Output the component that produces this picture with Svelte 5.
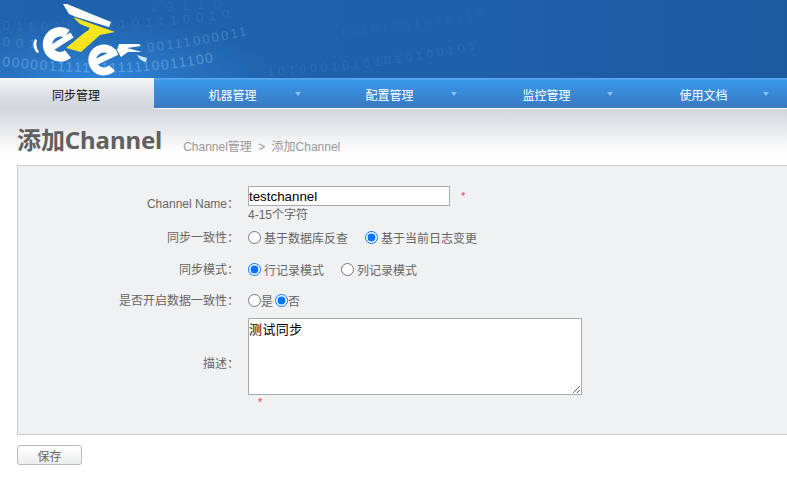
<script>
  const nav = ['机器管理', '配置管理', '监控管理', '使用文档'];
  const bits = [
    { d: 'M2 66 C 50 72, 120 76, 175 68 S 250 56, 340 40', t: '000001111101111110011100', s: 14, o: 0.36, l: 1.6 },
    { d: 'M148 52 C 180 48, 220 42, 265 31', t: '00111000011', s: 13, o: 0.26, l: 2.4 },
    { d: 'M2 46 C 40 50, 70 50, 100 46', t: '00110', s: 13, o: 0.2, l: 6 },
    { d: 'M2 30 C 60 32, 110 30, 170 25 S 260 12, 330 2', t: '011010110101110010', s: 13, o: 0.13, l: 6 },
    { d: 'M150 12 C 190 10, 220 8, 270 4', t: '10110', s: 13, o: 0.09, l: 9 },
    { d: 'M268 76 C 330 72, 420 64, 520 40', t: '10100010101010100101', s: 12, o: 0.12, l: 4 },
    { d: 'M340 36 C 400 32, 450 24, 520 10', t: '10101001010110', s: 12, o: 0.07, l: 4 }
  ];
</script>

<div class="page">
  <header class="banner">
    <svg class="binary" width="787" height="78" viewBox="0 0 787 78" aria-hidden="true">
      <defs>
        {#each bits as b, i}
          <path id={'bit' + i} d={b.d} />
        {/each}
      </defs>
      {#each bits as b, i}
        <text class="bit" font-size={b.s} fill-opacity={b.o} letter-spacing={b.l}><textPath href={'#bit' + i}>{b.t}</textPath></text>
      {/each}
    </svg>
    <svg class="logo" width="130" height="80" viewBox="25 0 130 80" aria-hidden="true">
      <path d="M63 4 L67 4 L111 22 L109 27 L76 17 L69 14 Z" fill="#fff" />
      <path d="M35 39 Q31 46 37 53 L39 52 Q35 46 37 40 Z" fill="#fff" />
      <path d="M67 34 A12.5 12.5 0 1 0 68 54" fill="none" stroke="#fff" stroke-width="9.5" />
      <path d="M50 49 L72 35" stroke="#fff" stroke-width="6" />
      <path d="M73 17 L115 32 L100 35 L81 52 L66 48 L90 28 L80 24 Z" fill="#f5e51e" />
      <path d="M81 32 L87 28 L89 30 L79 35 Z" fill="#1d63ad" />
      <path d="M113 53 A11.5 11.5 0 1 0 112 68" fill="none" stroke="#fff" stroke-width="8" />
      <path d="M94 63 L117 52" stroke="#fff" stroke-width="6" />
      <path d="M119 44 L139 44 L141 46 L127 48 L142 52 L128 52 L121 57 L117 50 Z" fill="#fff" />
      <path d="M137 55 L147 58 L146 62 Q140 61 137 55 Z" fill="#cfe6fa" />
    </svg>
  </header>

  <nav class="menu">
    <a class="item active" href="#top">同步管理</a>
    {#each nav as n}
      <a class="item" href="#top">{n}<span class="caret"></span></a>
    {/each}
  </nav>

  <div class="head">
    <h1>添加Channel</h1>
    <p class="crumb">Channel管理 <span class="sep">&gt;</span> 添加Channel</p>
  </div>

  <form class="panel">
    <div class="row r-name">
      <span class="label">Channel Name：</span>
      <div class="field">
        <div class="inline">
          <input class="text" value="testchannel" />
          <span class="star">*</span>
        </div>
        <div class="hint">4-15个字符</div>
      </div>
    </div>
    <div class="row r-a">
      <span class="label">同步一致性：</span>
      <div class="field opts">
        <label><input type="radio" name="a" />基于数据库反查</label>
        <label><input type="radio" name="a" checked />基于当前日志变更</label>
      </div>
    </div>
    <div class="row r-b">
      <span class="label">同步模式：</span>
      <div class="field opts">
        <label><input type="radio" name="b" checked />行记录模式</label>
        <label><input type="radio" name="b" />列记录模式</label>
      </div>
    </div>
    <div class="row r-c">
      <span class="label">是否开启数据一致性：</span>
      <div class="field opts tight">
        <label><input type="radio" name="c" />是</label>
        <label><input type="radio" name="c" checked />否</label>
      </div>
    </div>
    <div class="row r-d">
      <span class="label">描述：</span>
      <div class="field">
        <textarea>测试同步</textarea>
      </div>
    </div>
    <div class="star star2">*</div>
  </form>

  <button class="save" type="button">保存</button>
</div>

<style>
  :global(body) {
    margin: 0;
    background: #fff;
    overflow: hidden;
  }
  .page {
    width: 787px;
    height: 479px;
    overflow: hidden;
    font-family: "Liberation Sans", "Noto Sans CJK SC", sans-serif;
    font-size: 12px;
    color: #666;
  }
  .banner {
    position: relative;
    height: 78px;
    overflow: hidden;
    background:
      radial-gradient(ellipse 190px 62px at 95px 80px, #2f86dc 0%, rgba(42, 120, 200, 0.75) 45%, rgba(30, 92, 165, 0) 100%),
      linear-gradient(90deg, #2063ad 0%, #1f60aa 60%, #1b5a9f 100%);
  }
  .binary, .logo {
    position: absolute;
    left: 0;
    top: 0;
  }
  .logo {
    left: 25px;
  }
  .bit {
    font-family: "Liberation Sans", sans-serif;
    fill: #b5daf7;
  }
  .menu {
    display: flex;
    height: 30px;
    border-bottom: 1px solid #fff;
    background: linear-gradient(#5ba7ef 0, #5ba7ef 1px, #3899ec 2px, #3a78c0 100%);
  }
  .item {
    position: relative;
    flex: 0 0 157px;
    line-height: 37px;
    height: 30px;
    text-align: center;
    color: #fff;
    text-decoration: none;
  }
  .active {
    flex-basis: 154px;
    height: 31px;
    text-indent: -2px;
    color: #111;
    background: linear-gradient(#f6f6f7, #e0e3e8 45%, #d0d4dc);
  }
  .caret {
    position: absolute;
    right: 10px;
    top: 14px;
    width: 0;
    height: 0;
    border: 3px solid transparent;
    border-top: 4px solid #8ec2f0;
    border-bottom: 0;
  }
  .item:nth-child(3) .caret { right: 11px; }
  .item:nth-child(4) .caret { right: 12px; }
  .item:nth-child(5) .caret { right: 13px; }
  .head {
    display: flex;
    align-items: flex-end;
    height: 56px;
    box-sizing: border-box;
    padding: 0 0 9px 17px;
    background: linear-gradient(#d2d5da, #e6e8eb 35%, #fdfdfd 75%, #fff);
  }
  h1 {
    margin: 0;
    font: bold 24px/32px "Noto Sans", "Noto Sans CJK SC", sans-serif;
    letter-spacing: -0.1px;
    color: #606060;
  }
  .crumb {
    margin: 0 0 0 21px;
    line-height: 18px;
    color: #999;
  }
  .sep {
    margin: 0 3px;
  }
  .panel {
    box-sizing: border-box;
    height: 270px;
    width: 790px;
    margin-left: 17px;
    padding-top: 20px;
    border: 1px solid #ccc;
    background: #f0f1f3;
  }
  .row {
    display: grid;
    grid-template-columns: 221px 1fr;
    column-gap: 9px;
  }
  .label {
    text-align: right;
    line-height: 18px;
  }
  .r-name {
    height: 42px;
  }
  .r-name .label {
    padding-top: 9px;
  }
  .r-a {
    height: 32px;
  }
  .r-b {
    height: 31px;
  }
  .r-c {
    height: 27px;
  }
  .r-a .label,
  .r-b .label,
  .r-c .label {
    padding-top: 1px;
  }
  .r-d {
    align-items: center;
    height: 77px;
  }
  .r-d .label {
    padding-top: 15px;
  }
  .inline {
    display: flex;
    align-items: center;
    height: 20px;
  }
  .text {
    box-sizing: border-box;
    width: 202px;
    height: 20px;
    padding: 0;
    border: 1px solid #aaa;
    border-radius: 0;
    outline: 0;
    font: 13.33px "Liberation Sans", sans-serif;
    color: #000;
  }
  .star {
    margin-left: 11px;
    color: #f2325a;
    font-size: 11px;
    line-height: 14px;
  }
  .hint {
    padding-top: 1px;
    line-height: 16px;
  }
  .opts {
    display: flex;
    gap: 17px;
    height: 18px;
    align-items: center;
  }
  .opts.tight {
    gap: 2px;
  }
  .opts label {
    display: flex;
    align-items: center;
  }
  .opts input {
    margin: 0 3px 0 0;
  }
  .tight input {
    margin: 0;
  }
  textarea {
    display: block;
    box-sizing: border-box;
    width: 334px;
    height: 77px;
    margin: 0;
    padding: 0;
    border: 1px solid #aaa;
    border-radius: 0;
    outline: 0;
    font: 13px "Noto Sans CJK SC", sans-serif;
    letter-spacing: 0.4px;
    color: #000;
  }
  .star2 {
    margin: 0 0 0 240px;
    line-height: 10px;
    padding-top: 2px;
  }
  .save {
    display: block;
    width: 65px;
    height: 20px;
    margin: 10px 0 0 17px;
    padding: 0;
    border: 1px solid #bbb;
    border-radius: 3px;
    background: linear-gradient(#fff, #eceded);
    font: 12px "Liberation Sans", "Noto Sans CJK SC", sans-serif;
    color: #666;
  }
</style>
